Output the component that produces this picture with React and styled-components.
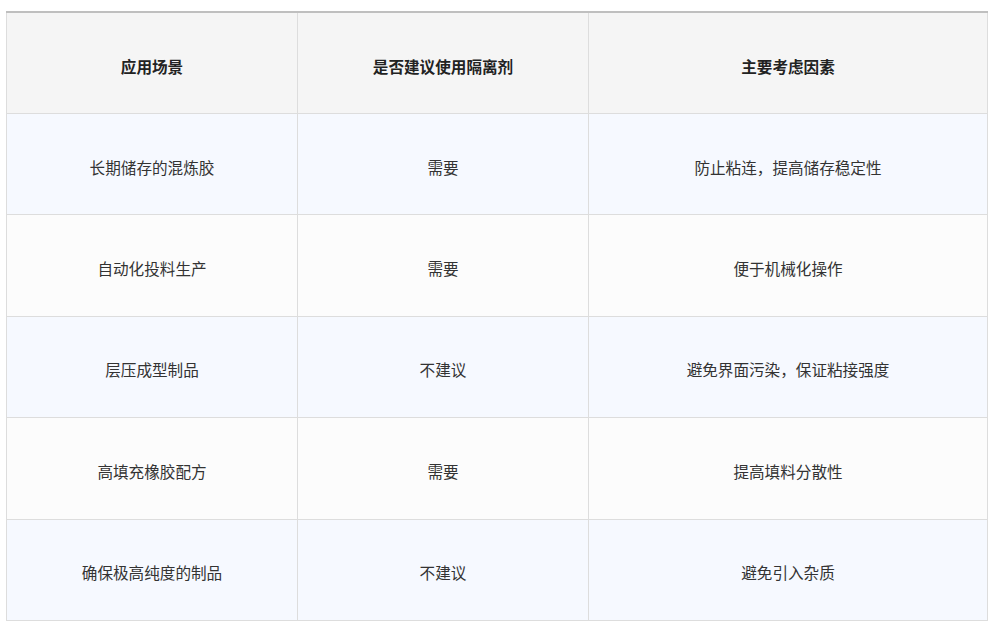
import React from "react";
import styled, { createGlobalStyle } from "styled-components";

const Global = createGlobalStyle`
  html, body { margin: 0; padding: 0; background: #ffffff; }
  body {
    font-family: "Noto Sans CJK SC", "Noto Sans", sans-serif;
    color: #333333;
  }
`;

const Wrap = styled.div`
  padding: 11px 6px 10px 6px;
`;

const Table = styled.table`
  width: 981px;
  border-collapse: collapse;
  table-layout: fixed;
  border-top: 2px solid #bfbfbf;
  font-size: 15.6px;
`;

const Col = styled.col`
  width: ${(p) => p.$w}px;
`;

const HeadCell = styled.th`
  background: #f5f5f5;
  border: 1px solid #dddddd;
  border-top: none;
  height: 95px;
  padding: 5px 16px 0 16px;
  font-weight: 700;
  color: #222222;
  text-align: center;
  vertical-align: middle;
`;

const Row = styled.tr`
  background: ${(p) => (p.$odd ? "#f6f9ff" : "#fcfcfc")};
`;

const Cell = styled.td`
  border: 1px solid #dddddd;
  height: 95.4px;
  padding: 5px 16px 0 16px;
  text-align: center;
  vertical-align: middle;
  color: #333333;
`;

const headers = ["应用场景", "是否建议使用隔离剂", "主要考虑因素"];

const rows = [
  ["长期储存的混炼胶", "需要", "防止粘连，提高储存稳定性"],
  ["自动化投料生产", "需要", "便于机械化操作"],
  ["层压成型制品", "不建议", "避免界面污染，保证粘接强度"],
  ["高填充橡胶配方", "需要", "提高填料分散性"],
  ["确保极高纯度的制品", "不建议", "避免引入杂质"],
];

export default function App() {
  return (
    <>
      <Global />
      <Wrap>
        <Table>
          <colgroup>
            <Col $w={291} />
            <Col $w={291} />
            <Col $w={399} />
          </colgroup>
          <thead>
            <tr>
              {headers.map((h) => (
                <HeadCell key={h}>{h}</HeadCell>
              ))}
            </tr>
          </thead>
          <tbody>
            {rows.map((r, i) => (
              <Row key={r[0]} $odd={i % 2 === 0}>
                {r.map((c, j) => (
                  <Cell key={j}>{c}</Cell>
                ))}
              </Row>
            ))}
          </tbody>
        </Table>
      </Wrap>
    </>
  );
}
